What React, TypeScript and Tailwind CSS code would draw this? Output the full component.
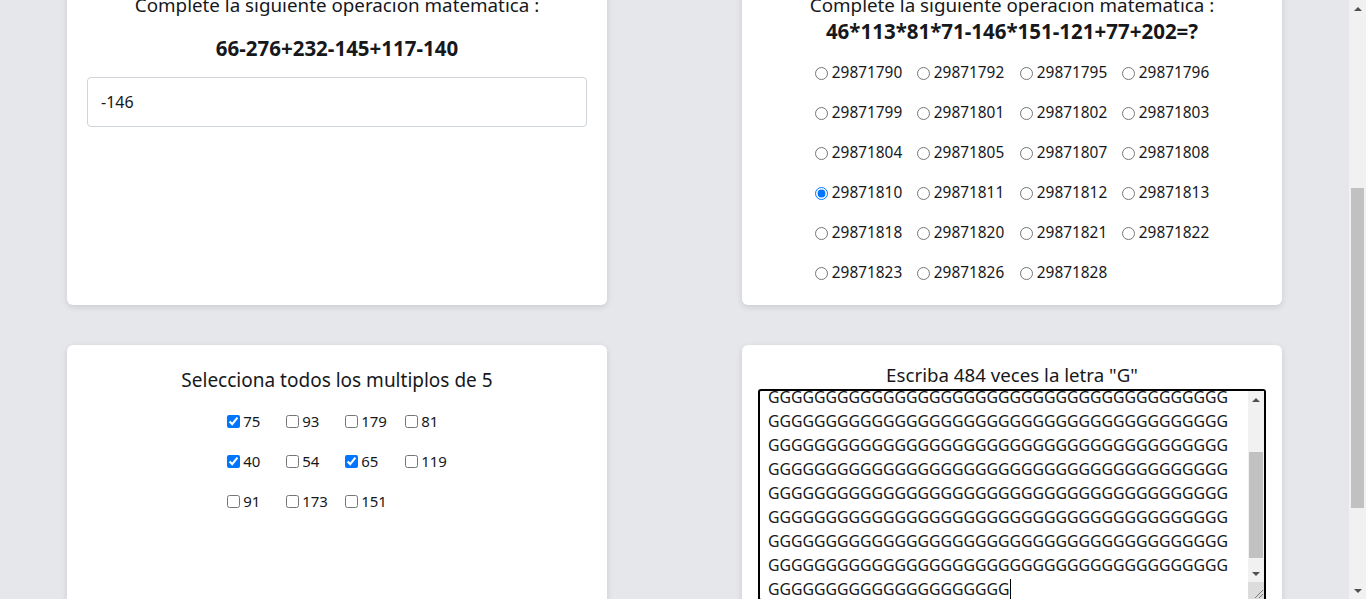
import React from "react";

const RADIOS = [
  "29871790", "29871792", "29871795", "29871796",
  "29871799", "29871801", "29871802", "29871803",
  "29871804", "29871805", "29871807", "29871808",
  "29871810", "29871811", "29871812", "29871813",
  "29871818", "29871820", "29871821", "29871822",
  "29871823", "29871826", "29871828",
];

const CHECKS = [
  { v: "75", c: true }, { v: "93", c: false }, { v: "179", c: false }, { v: "81", c: false },
  { v: "40", c: true }, { v: "54", c: false }, { v: "65", c: true }, { v: "119", c: false },
  { v: "91", c: false }, { v: "173", c: false }, { v: "151", c: false },
];

const FULL_LINE = "G".repeat(40);
const LINES = [...Array(8).fill(FULL_LINE), "G".repeat(21)];

function ArrowUp() {
  return <div className="w-0 h-0 border-x-[4px] border-x-transparent border-b-[4px] border-b-[#505050]" />;
}

function ArrowDown() {
  return <div className="w-0 h-0 border-x-[4px] border-x-transparent border-t-[4px] border-t-[#505050]" />;
}

export default function App() {
  return (
    <div className="flex h-[599px] overflow-hidden bg-[#e5e7eb] text-[#16181b] font-['Noto_Sans','Open_Sans',sans-serif]">
      <main className="flex-1 overflow-hidden">
        <div className="w-[1215px] mx-auto -mt-[27px] grid grid-cols-2 gap-x-[135px] gap-y-[40px]">
          {/* Operacion - respuesta libre */}
          <div className="bg-white rounded-md shadow-[0_2px_6px_rgba(0,0,0,0.12)] px-5 pt-5 text-center">
            <p className="text-[18.8px] leading-[24px]">Complete la siguiente operacion matematica :</p>
            <p className="mt-[17px] text-[20.5px] leading-[28px] font-bold">66-276+232-145+117-140</p>
            <input
              type="text"
              readOnly
              value="-146"
              className="mt-[15px] w-full h-[50px] border border-[#ced4da] rounded-[4px] px-[13px] text-[16px] text-[#16181b] outline-none"
            />
          </div>

          {/* Operacion - opciones */}
          <div className="bg-white rounded-md shadow-[0_2px_6px_rgba(0,0,0,0.12)] px-5 pt-5 pb-[12px] text-center">
            <p className="text-[18.8px] leading-[24px]">Complete la siguiente operacion matematica :</p>
            <p className="text-[20.5px] leading-[28px] font-bold">46*113*81*71-146*151-121+77+202=?</p>
            <div className="mt-[8px] mx-auto w-fit grid grid-cols-[102px_103px_102px_auto] text-[15.4px]">
              {RADIOS.map((r) => (
                <label key={r} className="h-[40px] flex items-center">
                  <input
                    type="radio"
                    name="op"
                    readOnly
                    checked={r === "29871810"}
                    className="w-[13px] h-[13px] mr-[4px] accent-[#0075ff]"
                  />
                  <span>{r}</span>
                </label>
              ))}
            </div>
          </div>

          {/* Multiplos */}
          <div className="bg-white rounded-md shadow-[0_2px_6px_rgba(0,0,0,0.12)] px-5 pt-[21px] h-[300px] text-center">
            <p className="text-[19px] leading-[28px]">Selecciona todos los multiplos de 5</p>
            <div className="mt-[7px] mx-auto w-fit grid grid-cols-[59px_59px_60px_auto] text-[15px]">
              {CHECKS.map((c) => (
                <label key={c.v} className="h-[40px] flex items-center">
                  <input
                    type="checkbox"
                    readOnly
                    checked={c.c}
                    className="w-[13px] h-[13px] mr-[3px] accent-[#0075ff]"
                  />
                  <span>{c.v}</span>
                </label>
              ))}
            </div>
          </div>

          {/* Escribir letra */}
          <div className="bg-white rounded-md shadow-[0_2px_6px_rgba(0,0,0,0.12)] px-4 pt-[18px] h-[300px] text-center">
            <p className="text-[18.7px] leading-[24px]">Escriba 484 veces la letra "G"</p>
            <div className="mt-[2px] h-[212px] border-2 border-black rounded-[3px] flex text-left">
              <div className="flex-1 overflow-hidden pl-[8px]">
                <div className="-mt-[6px] text-[15.8px] leading-[24px] whitespace-nowrap">
                  {LINES.map((l, i) => (
                    <div key={i} className="flex items-center">
                      <span>{l}</span>
                      {i === LINES.length - 1 && <span className="w-px h-[20px] bg-black" />}
                    </div>
                  ))}
                </div>
              </div>
              <div className="w-[16px] flex flex-col bg-[#f1f1f1]">
                <div className="h-[17px] flex items-center justify-center"><ArrowUp /></div>
                <div className="flex-1 pt-[44px] px-[1px]">
                  <div className="h-[106px] bg-[#c1c1c1]" />
                </div>
                <div className="h-[17px] flex items-center justify-center"><ArrowDown /></div>
                <div className="h-[17px] bg-[#dcdcdc] flex items-end justify-end">
                  <svg width="12" height="12" viewBox="0 0 12 12">
                    <path d="M11 3 L3 11 M11 7 L7 11" stroke="#7a7a7a" strokeWidth="1" />
                  </svg>
                </div>
              </div>
            </div>
          </div>
        </div>
      </main>

      {/* page scrollbar */}
      <div className="w-[17px] flex flex-col bg-[#f1f1f1]">
        <div className="h-[17px] flex items-center justify-center"><ArrowUp /></div>
        <div className="flex-1 pt-[171px] px-[2px]">
          <div className="h-[320px] bg-[#c1c1c1]" />
        </div>
        <div className="h-[17px] flex items-center justify-center"><ArrowDown /></div>
      </div>
    </div>
  );
}
